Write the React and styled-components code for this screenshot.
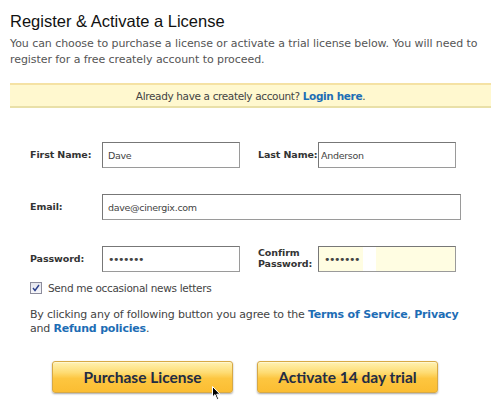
import React from 'react';
import styled, { createGlobalStyle } from 'styled-components';

const GlobalStyle = createGlobalStyle`
  body {
    margin: 0;
    background: #fff;
    font-family: "DejaVu Sans", Verdana, sans-serif;
    font-size: 11px;
    color: #4a4a4a;
  }
`;

const Root = styled.div`
  width: 500px;
  height: 405px;
  padding: 11px 9px 0 10px;
  box-sizing: border-box;
  position: relative;
  overflow: hidden;
`;

const Title = styled.h2`
  margin: 0;
  font-family: "Liberation Sans", Arial, sans-serif;
  font-weight: normal;
  font-size: 16.5px;
  line-height: 20px;
  color: #111;
`;

const Intro = styled.p`
  margin: 5px 0 0;
  line-height: 16px;
  color: #555;
  letter-spacing: -0.07px;
`;

const Banner = styled.div`
  margin-top: 15px;
  background: #fff8cf;
  border-top: 2px solid #f5e2a4;
  border-bottom: 2px solid #e9e0a8;
  padding: 3px 0 2px;
  line-height: 16px;
  font-size: 10.5px;
  text-align: center;
  color: #444;
  letter-spacing: -0.36px;
`;

const Link = styled.a`
  color: #1d6db5;
  font-weight: bold;
  text-decoration: none;
`;

const Form = styled.div`
  padding: 34px 0 0 20px;
  display: flex;
  flex-direction: column;
  gap: 26px;
`;

const Row = styled.div`
  display: flex;
  align-items: center;
`;

const Label = styled.label`
  width: ${({ w }) => w}px;
  flex-shrink: 0;
  white-space: nowrap;
  font-weight: bold;
  font-size: 9.5px;
  color: #333;
  line-height: 11px;
  letter-spacing: -0.1px;
  margin-top: -2px;
`;

const Input = styled.input`
  width: ${({ w }) => w}px;
  height: 26px;
  box-sizing: border-box;
  border: 1px solid #9a9a9a;
  border-top-color: #777;
  border-left-color: #777;
  padding: 0 ${({ pl }) => pl ?? 5}px;
  font-family: "DejaVu Sans", Verdana, sans-serif;
  font-size: 9.5px;
  color: #444;
  background: ${({ autofill }) =>
    autofill
      ? 'linear-gradient(to right, #fffde2 0 44px, #fff 44px 57px, #fffde2 57px)'
      : '#fff'};
  outline: none;
  letter-spacing: -0.3px;

  &[type='password'] {
    font-size: 11px;
    letter-spacing: -1.5px;
  }
`;

const Gap = styled.div`
  width: ${({ w }) => w}px;
  flex-shrink: 0;
`;

const CheckRow = styled.label`
  display: flex;
  align-items: center;
  gap: 6px;
  margin: 10px 0 0 20px;
  color: #444;
  font-size: 10.5px;
  letter-spacing: -0.3px;
`;

const Box = styled.span`
  width: 10px;
  height: 10px;
  border: 1px solid #8c8c9c;
  background: linear-gradient(#e4e6ee, #f7f7fa);
  display: flex;
  align-items: center;
  justify-content: center;
`;

const Agree = styled.p`
  margin: 14px 0 0 20px;
  line-height: 14px;
  color: #444;
  letter-spacing: -0.19px;
`;

const Buttons = styled.div`
  display: flex;
  gap: 24px;
  margin: 25px 0 0 42px;
`;

const Button = styled.button`
  position: relative;
  width: 181px;
  height: 32px;
  border: 1px solid #d7a945;
  border-radius: 3px;
  background: linear-gradient(#fff2b3 0%, #fedc73 35%, #fdc640 55%, #fbbd32 100%);
  box-shadow: 0 1px 2px rgba(0, 0, 0, 0.35), inset 0 1px 0 #fff7d0;
  font-family: Lato, "Open Sans", sans-serif;
  font-weight: bold;
  font-size: 15.5px;
  color: #232c44;
  padding: 0;
  cursor: pointer;
`;

const Cursor = styled.svg`
  position: absolute;
  left: 159px;
  top: 24px;
`;

export default function App() {
  return (
    <Root>
      <GlobalStyle />
      <Title>Register &amp; Activate a License</Title>
      <Intro>
        You can choose to purchase a license or activate a trial license below. You will need to
        register for a free creately account to proceed.
      </Intro>
      <Banner>
        Already have a creately account? <Link href="#">Login here</Link>.
      </Banner>
      <Form>
        <Row>
          <Label w={72}>First Name:</Label>
          <Input w={138} defaultValue="Dave" />
          <Gap w={18} />
          <Label w={60}>Last Name:</Label>
          <Input w={138} pl={2} defaultValue="Anderson" />
        </Row>
        <Row>
          <Label w={72}>Email:</Label>
          <Input w={359} defaultValue="dave@cinergix.com" />
        </Row>
        <Row>
          <Label w={72}>Password:</Label>
          <Input w={138} type="password" defaultValue="1234567" />
          <Gap w={18} />
          <Label w={60}>
            Confirm
            <br />
            Password:
          </Label>
          <Input w={138} type="password" autofill defaultValue="1234567" />
        </Row>
      </Form>
      <CheckRow>
        <Box>
          <svg width="8" height="8" viewBox="0 0 8 8">
            <path d="M1 4 L3 6.5 L7 1" fill="none" stroke="#2a3f8c" strokeWidth="1.4" />
          </svg>
        </Box>
        Send me occasional news letters
      </CheckRow>
      <Agree>
        By clicking any of following button you agree to the <Link href="#">Terms of Service</Link>,{' '}
        <Link href="#">Privacy</Link>
        <br />
        and <Link href="#">Refund policies</Link>.
      </Agree>
      <Buttons>
        <Button>
          Purchase License
          <Cursor width="9" height="15" viewBox="0 0 9 15">
            <path d="M0.5 0.5 L0.5 11 L3 8.6 L5 13.5 L6.6 12.8 L4.7 8.2 L8 8.2 Z" fill="#000" stroke="#fff" strokeWidth="1" />
          </Cursor>
        </Button>
        <Button>Activate 14 day trial</Button>
      </Buttons>
    </Root>
  );
}
